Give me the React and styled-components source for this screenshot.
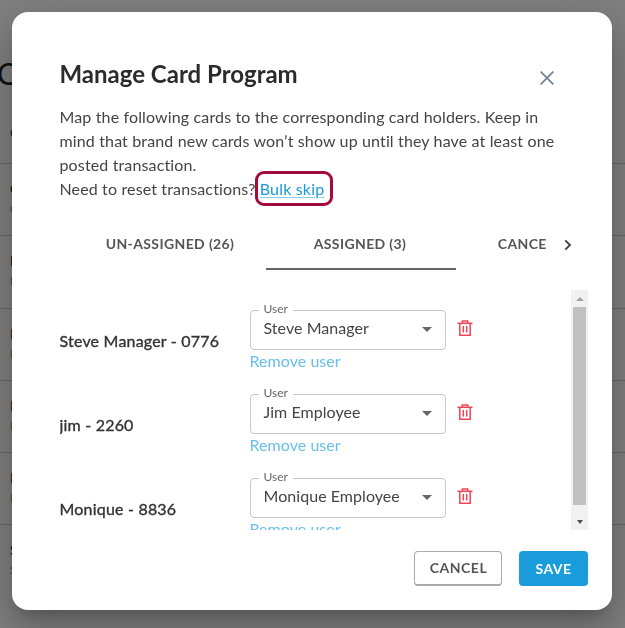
import React from 'react';
import styled, {createGlobalStyle} from 'styled-components';

const assigned = [
	{card: 'Steve Manager - 0776', user: 'Steve Manager'},
	{card: 'jim - 2260', user: 'Jim Employee'},
	{card: 'Monique - 8836', user: 'Monique Employee'},
];

const backgroundRows = ['C', 'D', 'D', 'D', 'D', 'S'];

export default function App() {
	return (
		<>
			<GlobalStyle />
			<Page>
				<PageTitle>Cards</PageTitle>
				<PageCaption>Card</PageCaption>
				{backgroundRows.map((letter, index) => (
					<PageRow key={index}>
						<b>{letter}ard</b>
						<PageRowNote>{letter}0</PageRowNote>
					</PageRow>
				))}
			</Page>
			<Overlay>
				<Modal role="dialog" aria-label="Manage Card Program">
					<Header>
						<Title>Manage Card Program</Title>
						<CloseButton type="button" aria-label="Close">
							<svg width="14" height="14" viewBox="0 0 14 14">
								<path d="M0.7 0.7L13.3 13.3M13.3 0.7L0.7 13.3" stroke="#6f8296" strokeWidth="1.7" fill="none" />
							</svg>
						</CloseButton>
					</Header>
					<Description>
						Map the following cards to the corresponding card holders. Keep in mind that brand new cards won’t show up
						until they have at least one posted transaction.
						<br />
						Need to reset transactions? <BulkSkip href="#bulk">Bulk skip</BulkSkip>
					</Description>
					<TabBar>
						<TabViewport>
							<Tab>UN-ASSIGNED (26)</Tab>
							<Tab $active>ASSIGNED (3)</Tab>
							<Tab>CANCELLED (1)</Tab>
						</TabViewport>
						<TabArrow type="button" aria-label="More tabs">
							<svg width="8" height="12" viewBox="0 0 8 12">
								<path d="M1.3 1.3L6 6L1.3 10.7" stroke="#444" strokeWidth="1.9" fill="none" />
							</svg>
						</TabArrow>
					</TabBar>
					<ListArea>
						<RowList>
							{assigned.map(row => (
								<CardRow key={row.card}>
									<CardName>{row.card}</CardName>
									<UserColumn>
										<SelectLine>
											<Select>
												<SelectLabel>User</SelectLabel>
												<SelectValue>{row.user}</SelectValue>
												<Caret />
											</Select>
											<TrashButton type="button" aria-label="Remove">
												<svg width="16" height="16" viewBox="0 0 16 16" fill="none" stroke="#f04452" strokeWidth="1.5">
													<path d="M0.5 3.3H15.5" />
													<path d="M5.3 3V0.9H10.7V3" />
													<path d="M2.8 3.3V15.2H13.2V3.3" />
													<path d="M6.3 6V12.6M9.7 6V12.6" />
												</svg>
											</TrashButton>
										</SelectLine>
										<RemoveUser>Remove user</RemoveUser>
									</UserColumn>
								</CardRow>
							))}
						</RowList>
						<Scrollbar>
							<ScrollArrow>
								<UpTriangle />
							</ScrollArrow>
							<ScrollTrack>
								<ScrollThumb />
							</ScrollTrack>
							<ScrollArrow>
								<DownTriangle />
							</ScrollArrow>
						</Scrollbar>
					</ListArea>
					<Footer>
						<CancelButton type="button">CANCEL</CancelButton>
						<SaveButton type="button">SAVE</SaveButton>
					</Footer>
				</Modal>
			</Overlay>
		</>
	);
}

const GlobalStyle = createGlobalStyle`
	html, body {
		margin: 0;
		height: 100%;
		overflow: hidden;
		background: #fff;
		font-family: 'Lato', sans-serif;
	}
	* {
		box-sizing: border-box;
	}
`;

const Page = styled.div`
	height: 628px;
	padding: 54px 0 0;
	border-top: 1px solid #fff;
	overflow: hidden;
`;

const PageTitle = styled.h1`
	height: 62px;
	margin: 0 0 0 -3px;
	color: #222;
	font-size: 30px;
	font-weight: 400;
	line-height: 36px;
`;

const PageCaption = styled.div`
	height: 46px;
	padding: 6px 0 0 10px;
	color: #333;
	font-size: 14px;
	line-height: 20px;
`;

const PageRow = styled.div`
	display: flex;
	flex-direction: column;
	height: 72.3px;
	padding: 15px 0 0 10px;
	border-top: 1px solid #ccc;
	color: #333;
	font-size: 14px;
	line-height: 20px;
`;

const PageRowNote = styled.span`
	color: #888;
	font-size: 12px;
`;

const Overlay = styled.div`
	display: flex;
	position: fixed;
	inset: 0;
	padding: 12px 13px 18px 12px;
	background-color: rgba(0, 0, 0, 0.5);
`;

const Modal = styled.div`
	display: flex;
	flex: 1;
	flex-direction: column;
	padding: 0 24px 24px 48px;
	border-radius: 16px;
	background-color: #fff;
	box-shadow:
		0 11px 15px -7px rgba(0, 0, 0, 0.2),
		0 24px 38px 3px rgba(0, 0, 0, 0.14),
		0 9px 46px 8px rgba(0, 0, 0, 0.12);
`;

const Header = styled.div`
	display: flex;
	align-items: flex-start;
	justify-content: space-between;
	height: 91px;
	padding: 45px 34px 0 0;
`;

const Title = styled.h2`
	margin: 0 0 0 -0.5px;
	color: #2b2b2b;
	font-size: 24px;
	font-weight: 700;
	line-height: 34px;
`;

const CloseButton = styled.button`
	display: flex;
	margin-top: 14px;
	padding: 0;
	border: none;
	background-color: transparent;
`;

const Description = styled.p`
	width: 510px;
	height: 96px;
	margin: 2px 0 0 -0.5px;
	color: #444;
	font-size: 16px;
	letter-spacing: 0.14px;
	line-height: 24px;
`;

const BulkSkip = styled.a`
	display: inline-block;
	margin: -3px -4px -3px 0;
	padding: 3px 4px 3px 0;
	border-radius: 4px;
	color: #1a9bdb;
	letter-spacing: 0.18px;
	line-height: 19px;
	text-decoration: underline;
	text-decoration-color: #8ccdee;
	text-underline-offset: 2px;
	outline: 3px solid #a6093d;
	outline-offset: 2px;
`;

const TabBar = styled.div`
	display: flex;
	align-items: stretch;
	height: 44px;
	margin-top: 25px;
	padding-left: 16px;
`;

const TabViewport = styled.div`
	display: flex;
	flex: 0 0 471px;
	overflow: hidden;
`;

const Tab = styled.div`
	display: flex;
	flex: 0 0 190px;
	align-items: center;
	justify-content: center;
	height: 44px;
	padding: 0 2px 8px 0;
	border-bottom: 2px solid ${props => (props.$active ? '#666' : 'transparent')};
	color: #555;
	font-size: 14px;
	font-weight: 700;
	letter-spacing: 0.38px;
	white-space: nowrap;
`;

const TabArrow = styled.button`
	display: flex;
	align-items: center;
	justify-content: center;
	width: 41px;
	padding: 0 0 6px;
	border: none;
	background-color: transparent;
`;

const ListArea = styled.div`
	display: flex;
	height: 240px;
	margin-top: 20px;
`;

const RowList = styled.div`
	flex: 1;
	overflow: hidden;
`;

const Scrollbar = styled.div`
	display: flex;
	flex: 0 0 17px;
	flex-direction: column;
	background-color: #f1f1f1;
`;

const ScrollArrow = styled.div`
	display: flex;
	flex: 0 0 17px;
	align-items: center;
	justify-content: center;
`;

const UpTriangle = styled.span`
	width: 0;
	height: 0;
	border-right: 4px solid transparent;
	border-bottom: 4px solid #a3a3a3;
	border-left: 4px solid transparent;
`;

const DownTriangle = styled.span`
	width: 0;
	height: 0;
	border-top: 4px solid #505050;
	border-right: 3px solid transparent;
	border-left: 3px solid transparent;
`;

const ScrollTrack = styled.div`
	flex: 1;
	padding: 0 2px;
`;

const ScrollThumb = styled.div`
	height: 198px;
	background-color: #c1c1c1;
`;

const CardRow = styled.div`
	display: flex;
	align-items: center;
	height: 84px;
	padding-top: 20px;
`;

const CardName = styled.div`
	flex: 0 0 190px;
	margin: -4px 0 0 -0.5px;
	color: #333;
	font-size: 16px;
	font-weight: 400;
	letter-spacing: 0.2px;
	-webkit-text-stroke: 0.35px #333;
`;

const UserColumn = styled.div`
	display: flex;
	flex-direction: column;
	height: 64px;
`;

const SelectLine = styled.div`
	display: flex;
	gap: 11px;
`;

const Select = styled.div`
	display: flex;
	position: relative;
	align-items: center;
	justify-content: space-between;
	width: 196px;
	height: 40px;
	padding: 0 13px 5px 13px;
	border: 1px solid #c9c9c9;
	border-radius: 4px;
`;

const SelectLabel = styled.span`
	position: absolute;
	top: -9px;
	left: 8px;
	padding: 0 5px;
	background-color: #fff;
	color: #666;
	font-size: 12px;
	line-height: 14px;
`;

const SelectValue = styled.span`
	color: #444;
	font-size: 16px;
	letter-spacing: 0.05px;
`;

const Caret = styled.span`
	width: 0;
	height: 0;
	margin-top: 4px;
	border-top: 5px solid #666;
	border-right: 5px solid transparent;
	border-left: 5px solid transparent;
`;

const TrashButton = styled.button`
	display: flex;
	height: 16px;
	margin-top: 10px;
	padding: 0;
	border: none;
	background-color: transparent;
`;

const RemoveUser = styled.span`
	color: #68c0ea;
	font-size: 16px;
	letter-spacing: 0.05px;
	line-height: 22px;
`;

const Footer = styled.div`
	display: flex;
	gap: 17px;
	justify-content: flex-end;
	margin-top: 21px;
`;

const CancelButton = styled.button`
	width: 88px;
	height: 35px;
	padding: 0 0 1px 1px;
	border: 1px solid #aaa;
	border-bottom-width: 2px;
	border-radius: 4px;
	background-color: #fff;
	color: #555;
	font-family: inherit;
	font-size: 14px;
	font-weight: 700;
	letter-spacing: 0.5px;
`;

const SaveButton = styled.button`
	width: 69px;
	height: 35px;
	padding: 0;
	border: none;
	border-radius: 4px;
	background-color: #1a9bdb;
	color: #fff;
	font-family: inherit;
	font-size: 14px;
	font-weight: 700;
	letter-spacing: 0.5px;
`;
